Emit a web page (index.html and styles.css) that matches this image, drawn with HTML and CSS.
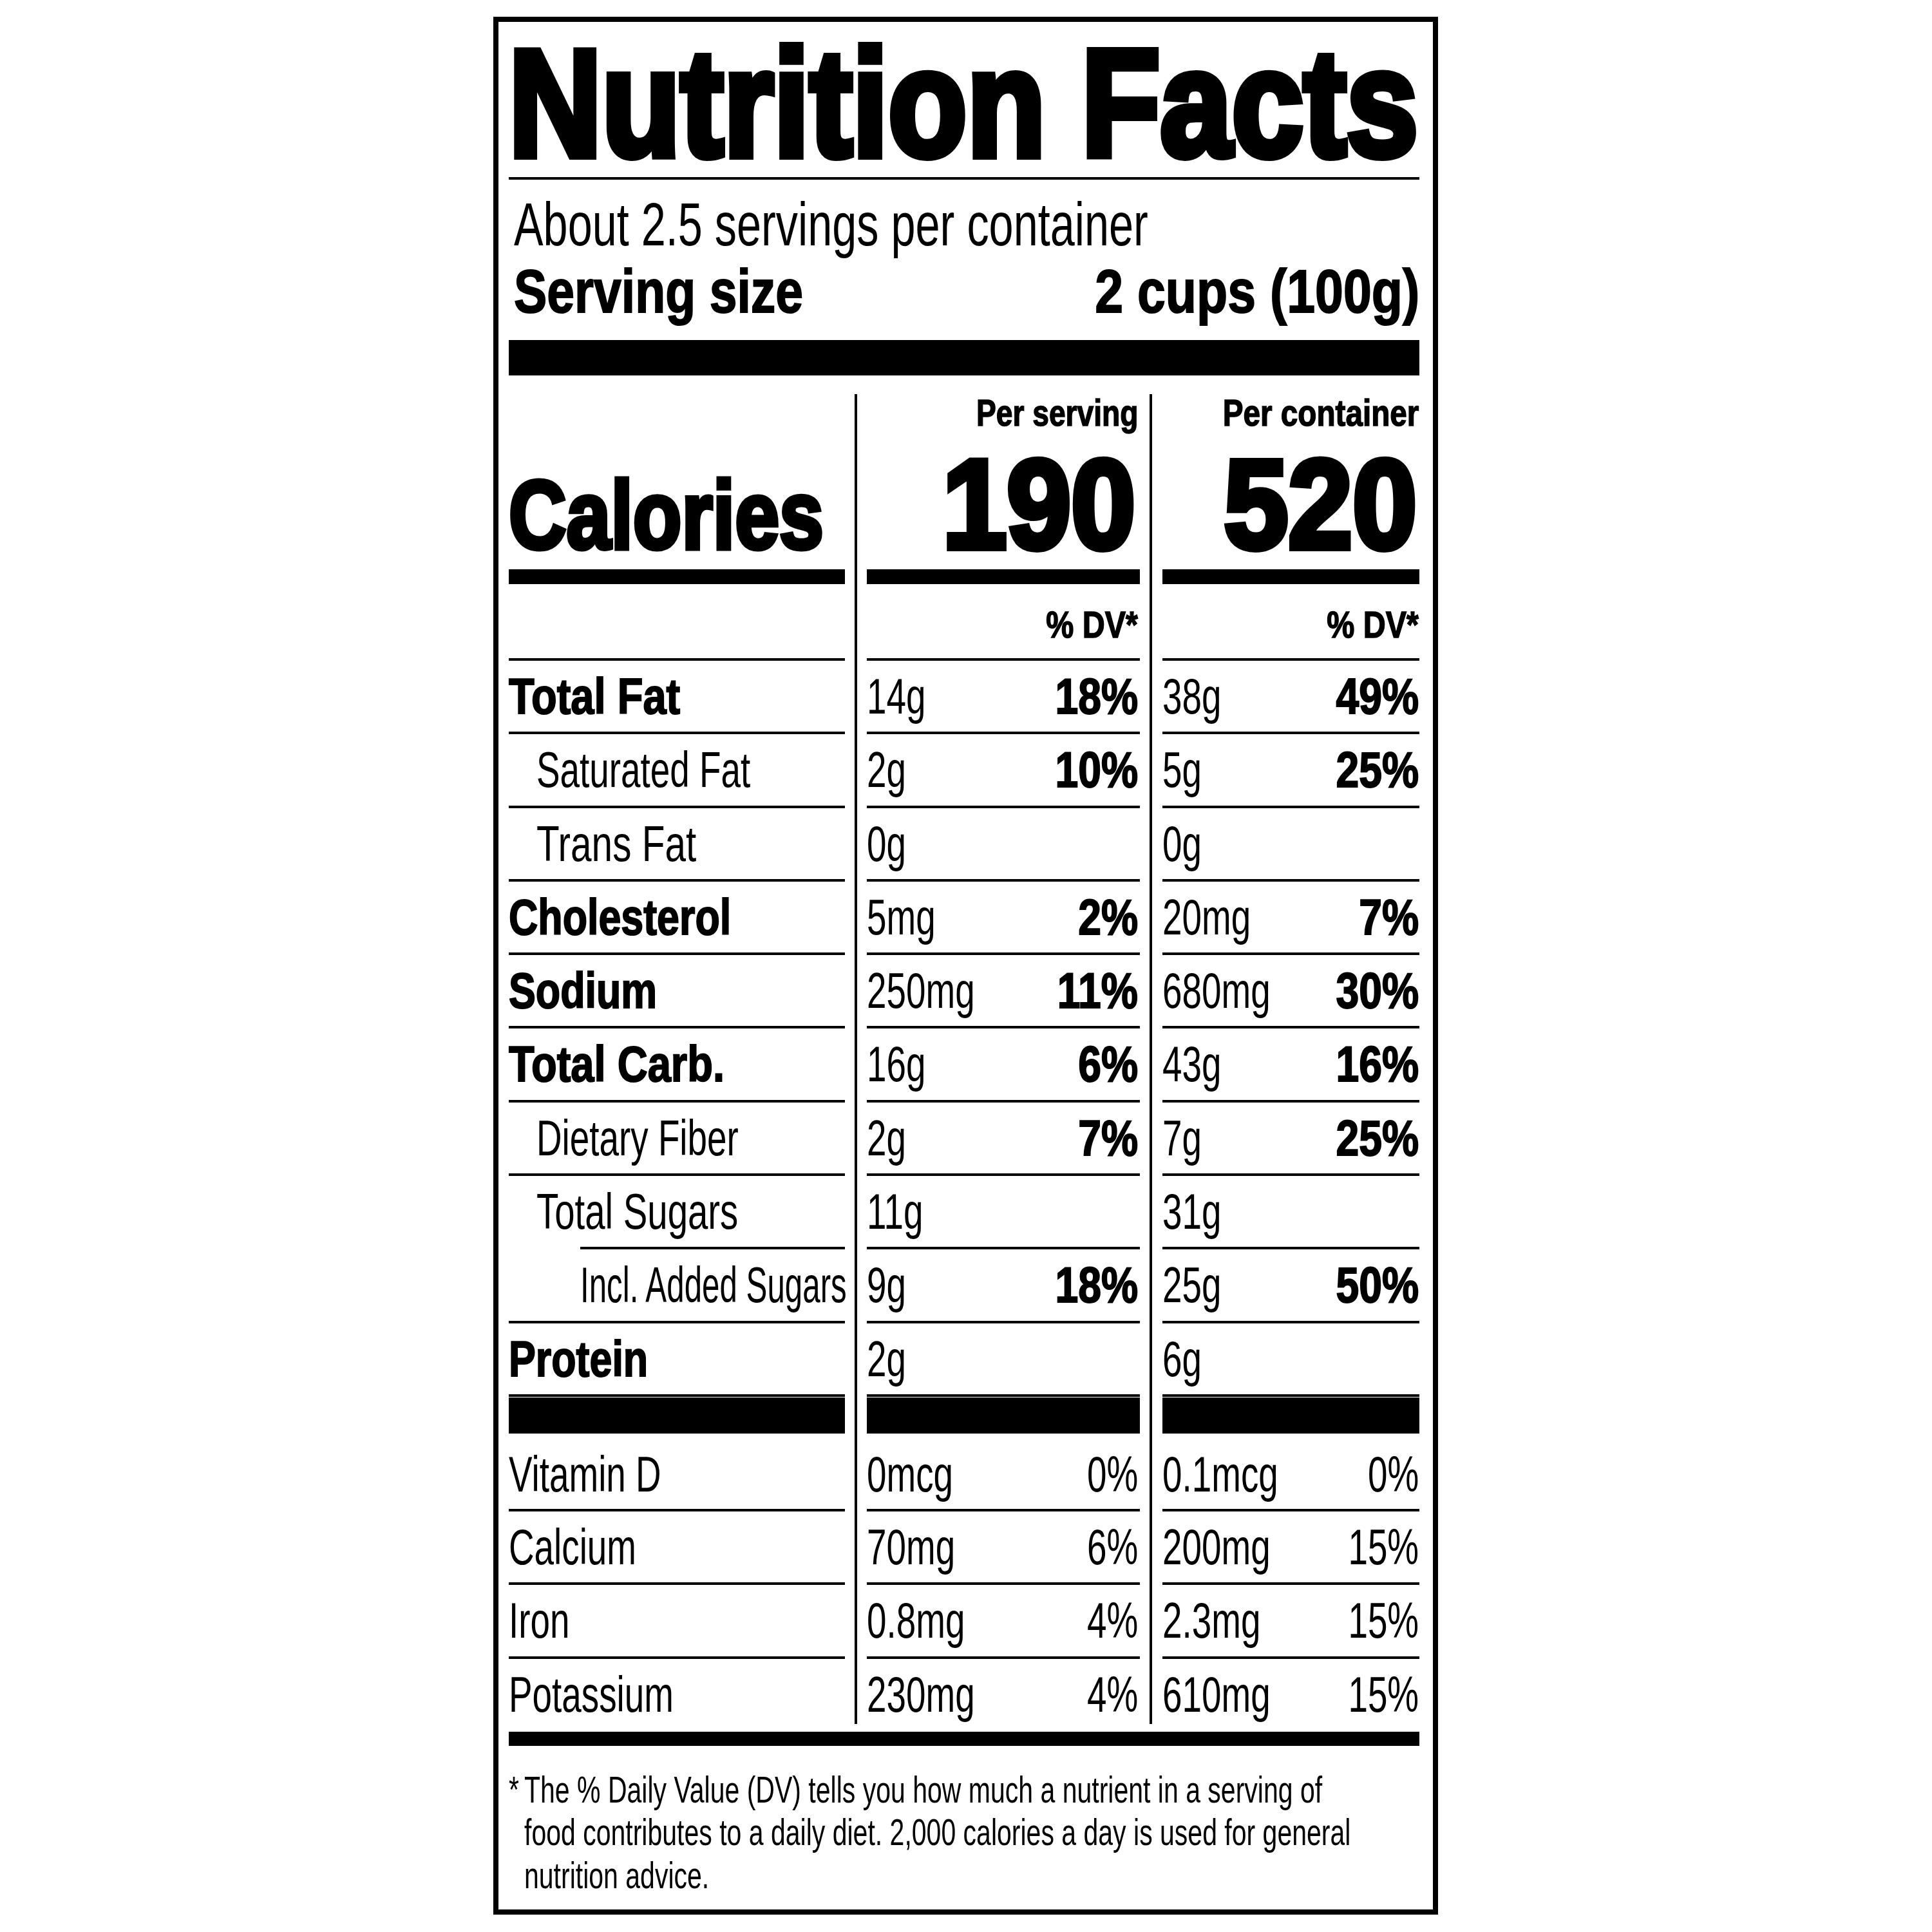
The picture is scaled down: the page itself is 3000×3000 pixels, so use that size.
FILE: index.html
```html
<!DOCTYPE html>
<html lang="en">
<head>
<meta charset="utf-8">
<title>Nutrition Facts</title>
<link rel="stylesheet" href="styles.css">
</head>
<body>
<div class="label">
  <h1 class="title"><span class="sx sx-title">Nutrition Facts</span></h1>
  <div class="servings"><span class="sx sx-reg">About 2.5 servings per container</span></div>
  <div class="serving-size">
    <span class="sx sx-bold">Serving size</span>
    <span class="sx sx-bold2 r">2 cups (100g)</span>
  </div>
  <div class="bar bar-top"></div>

  <div class="cols">
    <div class="col col-label">
      <div class="col-head"><div class="calories"><span class="sx sx-cal">Calories</span></div></div>
      <div class="bar bar-cal"></div>
      <div class="dv-row"></div>
      <div class="row b"><span class="sx sx-lb sx-total">Total Fat</span></div>
      <div class="row ind1"><span class="sx sx-r">Saturated Fat</span></div>
      <div class="row ind1"><span class="sx sx-trans">Trans Fat</span></div>
      <div class="row b"><span class="sx sx-lb">Cholesterol</span></div>
      <div class="row b"><span class="sx sx-lb">Sodium</span></div>
      <div class="row b"><span class="sx sx-lb sx-total">Total Carb.</span></div>
      <div class="row ind1"><span class="sx sx-r">Dietary Fiber</span></div>
      <div class="row ind1"><span class="sx sx-sugars">Total Sugars</span></div>
      <div class="row ind2"><span class="sx sx-added">Incl. Added Sugars</span></div>
      <div class="row b"><span class="sx sx-lb">Protein</span></div>
      <div class="rule-thin"></div>
      <div class="bar bar-vit"></div>
      <div class="row first"><span class="sx sx-r">Vitamin D</span></div>
      <div class="row"><span class="sx sx-r">Calcium</span></div>
      <div class="row"><span class="sx sx-r">Iron</span></div>
      <div class="row last"><span class="sx sx-r">Potassium</span></div>
    </div>

    <div class="col col-serv">
      <div class="col-head">
        <div class="per"><span class="sx sx-per r">Per serving</span></div>
        <div class="big"><span class="sx sx-big r">190</span></div>
      </div>
      <div class="bar bar-cal"></div>
      <div class="dv-row"><span class="sx sx-dv r">% DV*</span></div>
      <div class="row v"><span class="sx sx-r">14g</span><span class="sx sx-b r b">18%</span></div>
      <div class="row v"><span class="sx sx-r">2g</span><span class="sx sx-b r b">10%</span></div>
      <div class="row v"><span class="sx sx-r">0g</span></div>
      <div class="row v"><span class="sx sx-r">5mg</span><span class="sx sx-b r b">2%</span></div>
      <div class="row v"><span class="sx sx-r">250mg</span><span class="sx sx-b r b">11%</span></div>
      <div class="row v"><span class="sx sx-r">16g</span><span class="sx sx-b r b">6%</span></div>
      <div class="row v"><span class="sx sx-r">2g</span><span class="sx sx-b r b">7%</span></div>
      <div class="row v"><span class="sx sx-r">11g</span></div>
      <div class="row v"><span class="sx sx-r">9g</span><span class="sx sx-b r b">18%</span></div>
      <div class="row v"><span class="sx sx-r">2g</span></div>
      <div class="rule-thin"></div>
      <div class="bar bar-vit"></div>
      <div class="row v first"><span class="sx sx-r">0mcg</span><span class="sx sx-r r">0%</span></div>
      <div class="row v"><span class="sx sx-r">70mg</span><span class="sx sx-r r">6%</span></div>
      <div class="row v"><span class="sx sx-r">0.8mg</span><span class="sx sx-r r">4%</span></div>
      <div class="row v last"><span class="sx sx-r">230mg</span><span class="sx sx-r r">4%</span></div>
    </div>

    <div class="col col-cont">
      <div class="col-head">
        <div class="per"><span class="sx sx-per2 r">Per container</span></div>
        <div class="big"><span class="sx sx-big r">520</span></div>
      </div>
      <div class="bar bar-cal"></div>
      <div class="dv-row"><span class="sx sx-dv r">% DV*</span></div>
      <div class="row v"><span class="sx sx-r">38g</span><span class="sx sx-b r b">49%</span></div>
      <div class="row v"><span class="sx sx-r">5g</span><span class="sx sx-b r b">25%</span></div>
      <div class="row v"><span class="sx sx-r">0g</span></div>
      <div class="row v"><span class="sx sx-r">20mg</span><span class="sx sx-b r b">7%</span></div>
      <div class="row v"><span class="sx sx-r">680mg</span><span class="sx sx-b r b">30%</span></div>
      <div class="row v"><span class="sx sx-r">43g</span><span class="sx sx-b r b">16%</span></div>
      <div class="row v"><span class="sx sx-r">7g</span><span class="sx sx-b r b">25%</span></div>
      <div class="row v"><span class="sx sx-r">31g</span></div>
      <div class="row v"><span class="sx sx-r">25g</span><span class="sx sx-b r b">50%</span></div>
      <div class="row v"><span class="sx sx-r">6g</span></div>
      <div class="rule-thin"></div>
      <div class="bar bar-vit"></div>
      <div class="row v first"><span class="sx sx-r">0.1mcg</span><span class="sx sx-r r">0%</span></div>
      <div class="row v"><span class="sx sx-r">200mg</span><span class="sx sx-r r">15%</span></div>
      <div class="row v"><span class="sx sx-r">2.3mg</span><span class="sx sx-r r">15%</span></div>
      <div class="row v last"><span class="sx sx-r">610mg</span><span class="sx sx-r r">15%</span></div>
    </div>
  </div>

  <div class="bar bar-bottom"></div>

  <div class="footnote">
    <div class="ast"><span class="sx sx-foot">*</span></div>
    <div class="foot-text">
      <div><span class="sx sx-foot">The % Daily Value (DV) tells you how much a nutrient in a serving of</span></div>
      <div><span class="sx sx-foot">food contributes to a daily diet. 2,000 calories a day is used for general</span></div>
      <div><span class="sx sx-foot">nutrition advice.</span></div>
    </div>
  </div>
</div>
</body>
</html>
```

FILE: styles.css
```css
html, body {
  margin: 0;
  padding: 0;
  background: #fff;
}

body {
  font-family: "Liberation Sans", Arial, sans-serif;
  color: #000;
}

.label {
  box-sizing: border-box;
  width: 1467px;
  height: 2947px;
  margin: 26px 0 0 766px;
  border: 8px solid #000;
  padding: 0 21px 0 16px;
}

/* horizontally condensed text */
.sx {
  display: inline-block;
  white-space: nowrap;
  transform-origin: left center;
}
.sx.r {
  transform-origin: right center;
}
.sx-title { transform: scaleX(0.848); }
.sx-reg { transform: scaleX(0.72); }
.sx-bold { transform: scaleX(0.81); }
.sx-bold2 { transform: scaleX(0.83); }
.sx-cal { transform: scaleX(0.826); }
.sx-big { transform: scaleX(0.916); }
.sx-per { transform: scaleX(0.81); }
.sx-per2 { transform: scaleX(0.836); }
.sx-dv { transform: scaleX(0.85); }
.sx-b { transform: scaleX(0.835); }
.sx-lb { transform: scaleX(0.815); }
.sx-lb.sx-total { transform: scaleX(0.845); }
.sx-r { transform: scaleX(0.712); }
.sx-trans { transform: scaleX(0.76); }
.sx-sugars { transform: scaleX(0.732); }
.sx-added { transform: scaleX(0.64); }
.sx-foot { transform: scaleX(0.712); }

/* header */
.title {
  margin: 0;
  padding-top: 11px;
  height: 230px;
  line-height: 230px;
  font-size: 236px;
  font-weight: 700;
  -webkit-text-stroke: 12px #000;
  border-bottom: 4px solid #000;
}

.servings {
  margin-top: 17px;
  padding-left: 8px;
  height: 104px;
  line-height: 104px;
  font-size: 95px;
}

.serving-size {
  display: flex;
  justify-content: space-between;
  padding-left: 8px;
  height: 104px;
  line-height: 104px;
  font-size: 95px;
  font-weight: 700;
  -webkit-text-stroke: 2px #000;
}

.bar {
  background: #000;
}
.bar-top {
  margin-top: 24px;
  height: 55px;
}
.bar-cal {
  height: 23px;
}
.bar-vit {
  height: 56px;
}
.bar-bottom {
  margin-top: 12px;
  height: 22px;
}
.rule-thin {
  height: 4px;
  background: #000;
  margin-bottom: 1px;
}

/* columns */
.cols {
  display: flex;
  margin-top: 29px;
}
.col-label {
  width: 522px;
  margin-right: 15px;
}
.col-serv {
  width: 424px;
  border-left: 4px solid #000;
  padding-left: 15px;
  margin-right: 15px;
}
.col-cont {
  width: 399px;
  border-left: 4px solid #000;
  padding-left: 16px;
}

.col-head {
  height: 272px;
}

.calories {
  padding-top: 113px;
  line-height: 150px;
  font-size: 150px;
  font-weight: 700;
  -webkit-text-stroke: 7px #000;
}

.per {
  padding-top: 1px;
  height: 57px;
  line-height: 57px;
  font-size: 57px;
  font-weight: 700;
  text-align: right;
  -webkit-text-stroke: 1.5px #000;
}

.big {
  margin-top: 14px;
  height: 200px;
  line-height: 200px;
  font-size: 196px;
  font-weight: 700;
  text-align: right;
  -webkit-text-stroke: 10px #000;
}

.dv-row {
  box-sizing: border-box;
  height: 115px;
  padding-top: 12px;
  line-height: 103px;
  font-size: 57px;
  font-weight: 700;
  text-align: right;
  -webkit-text-stroke: 1.5px #000;
}

.row {
  border-top: 4px solid #000;
  height: 110.3px;
  line-height: 110.3px;
  font-size: 77px;
}
.row.b {
  font-weight: 700;
  -webkit-text-stroke: 2px #000;
}
.b {
  font-weight: 700;
  -webkit-text-stroke: 2px #000;
}
.row.ind1 {
  padding-left: 43px;
}
.row.ind2 {
  margin-left: 111px;
}
.row.v {
  display: flex;
  justify-content: space-between;
}
.row.first {
  box-sizing: border-box;
  border-top: 0;
  height: 117px;
  padding-top: 10px;
  line-height: 107px;
}
.row.last {
  height: 101px;
}

.col-serv .per,
.col-serv .dv-row,
.col-serv .row.v {
  padding-right: 3px;
}
.col-cont .per,
.col-cont .dv-row,
.col-cont .row.v {
  padding-right: 1px;
}
.col-serv .big {
  padding-right: 7px;
}
.col-cont .big {
  padding-right: 4px;
}

/* footnote */
.footnote {
  display: flex;
  margin-top: 35px;
  font-size: 57.6px;
  line-height: 66.5px;
}
.ast {
  width: 24px;
  flex: none;
}
```
